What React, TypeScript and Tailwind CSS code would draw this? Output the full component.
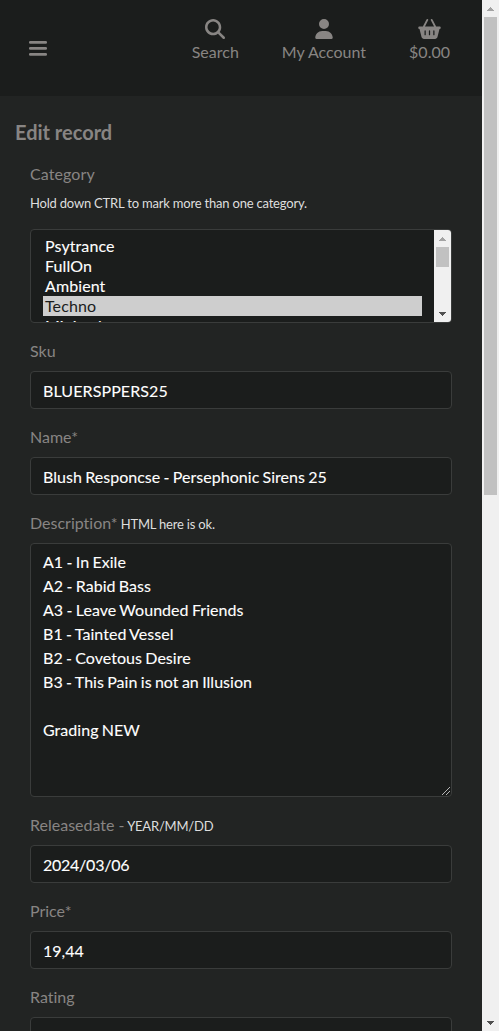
import React from 'react';
import { FaMagnifyingGlass, FaUser, FaBasketShopping } from 'react-icons/fa6';

const categories = ['Psytrance', 'FullOn', 'Ambient', 'Techno', 'Minimal'];

const tracks = `A1 - In Exile
A2 - Rabid Bass
A3 - Leave Wounded Friends
B1 - Tainted Vessel
B2 - Covetous Desire
B3 - This Pain is not an Illusion

Grading NEW`;

function Arrow({ down = false, color }: { down?: boolean; color: string }) {
  return (
    <svg width="17" height="17" viewBox="0 0 17 17" fill={color} shapeRendering="crispEdges" className="shrink-0">
      {down ? <path d="M5 7h7v1h-1v1h-1v1h-1v1h-1v-1h-1v-1h-1v-1h-1z" /> : <path d="M5 11h7v-1h-1v-1h-1v-1h-1v-1h-1v1h-1v1h-1v1h-1z" />}
    </svg>
  );
}

function Scrollbar({ thumb }: { thumb: string }) {
  return (
    <div className="flex w-[17px] shrink-0 flex-col items-center justify-between bg-[#f0f0f0]">
      <div className="flex flex-col items-center">
        <Arrow color="#a3a3a3" />
        <div className={`w-[13px] bg-[#c1c1c1] ${thumb}`} />
      </div>
      <Arrow down color="#505050" />
    </div>
  );
}

function Field({ label, hint, children }: { label: string; hint?: string; children: React.ReactNode }) {
  return (
    <div className="mb-4">
      <div className="mb-2 h-6 whitespace-pre leading-6 text-[#888583]">
        {label}
        {hint && <span className="text-[13px] tracking-[-0.2px] text-[#dedede]"> {hint}</span>}
      </div>
      {children}
    </div>
  );
}

const control =
  'block w-full resize-none rounded-[4px] border border-[#3a3c3b] bg-[#1b1d1c] px-3 py-1.5 leading-6 [word-spacing:-0.85px] text-white outline-none [-webkit-text-stroke:0.1px_#fff]';

function TextInput({ value, spacing = 'tracking-[0.03px]' }: { value: string; spacing?: string }) {
  return <input className={`${control} h-[38px] ${spacing}`} defaultValue={value} />;
}

function HeaderItem({ icon, text }: { icon: React.ReactNode; text: string }) {
  return (
    <a className="flex flex-col items-center">
      <span className="flex h-[22px] items-center">{icon}</span>
      <span className="leading-6">{text}</span>
    </a>
  );
}

export default function App() {
  return (
    <div className="flex h-[1031px] w-[499px] overflow-hidden bg-[#222423] font-['Lato',sans-serif] text-base text-[#888583] [font-variant-ligatures:none]">
      <div className="h-full w-[482px] overflow-hidden">
        <header className="flex h-24 items-start justify-between bg-[#1b1d1c] pr-8 pl-[29px]">
          <svg className="mt-[41px]" width="18" height="15" viewBox="0 0 18 15" fill="currentColor">
            <rect width="18" height="2.8" rx="1.2" />
            <rect y="6" width="18" height="2.8" rx="1.2" />
            <rect y="12" width="18" height="2.8" rx="1.2" />
          </svg>
          <nav className="flex gap-[43px] pt-[18px]">
            <HeaderItem icon={<FaMagnifyingGlass className="size-5" />} text="Search" />
            <HeaderItem icon={<FaUser className="size-5" />} text="My Account" />
            <HeaderItem icon={<FaBasketShopping className="h-5 w-[23px]" />} text="$0.00" />
          </nav>
        </header>
        <main className="px-[15px] pt-6">
          <h1 className="mb-[18px] h-6 text-xl leading-6 font-bold">Edit record</h1>
          <form className="px-[15px]">
            <div className="mb-4">
              <div className="leading-6 tracking-[0.1px]">Category</div>
              <div className="mt-[5px] mb-[14px] h-6 text-[13px] leading-6 tracking-[-0.2px] text-[#dedede]">
                Hold down CTRL to mark more than one category.
              </div>
              <div className="flex h-[94px] w-[422px] overflow-hidden rounded-[4px] border border-[#3a3c3b] bg-[#1b1d1c]">
                <ul className="flex-1 overflow-hidden px-3 py-1.5 tracking-[0.1px] text-white">
                  {categories.map((c) => (
                    <li
                      key={c}
                      className={
                        c === 'Techno'
                          ? 'h-5 bg-[#cecece] px-0.5 leading-5 text-[#1b1d1c]'
                          : 'h-5 px-0.5 leading-5 [-webkit-text-stroke:0.1px_#fff]'
                      }
                    >
                      {c}
                    </li>
                  ))}
                </ul>
                <Scrollbar thumb="h-5" />
              </div>
            </div>
            <div className="w-[422px]">
              <Field label="Sku">
                <TextInput value="BLUERSPPERS25" spacing="tracking-[0.1px]" />
              </Field>
              <Field label="Name*">
                <TextInput value="Blush Responcse - Persephonic Sirens 25" />
              </Field>
              <Field label="Description*" hint="HTML here is ok.">
                <div className="relative">
                  <textarea className={`${control} h-[254px] tracking-[0.04px]`} defaultValue={tracks} />
                  <svg className="absolute right-[2px] bottom-[2px]" width="8" height="8" viewBox="0 0 8 8" stroke="#b5b5b5" fill="none">
                    <path d="M0 8L8 0M4 8L8 4" />
                  </svg>
                </div>
              </Field>
              <Field label="Releasedate -" hint="YEAR/MM/DD">
                <TextInput value="2024/03/06" spacing="tracking-[-0.25px]" />
              </Field>
              <Field label="Price*">
                <TextInput value="19,44" />
              </Field>
              <Field label="Rating">
                <TextInput value="" />
              </Field>
            </div>
          </form>
        </main>
      </div>
      <Scrollbar thumb="h-[478px]" />
    </div>
  );
}
